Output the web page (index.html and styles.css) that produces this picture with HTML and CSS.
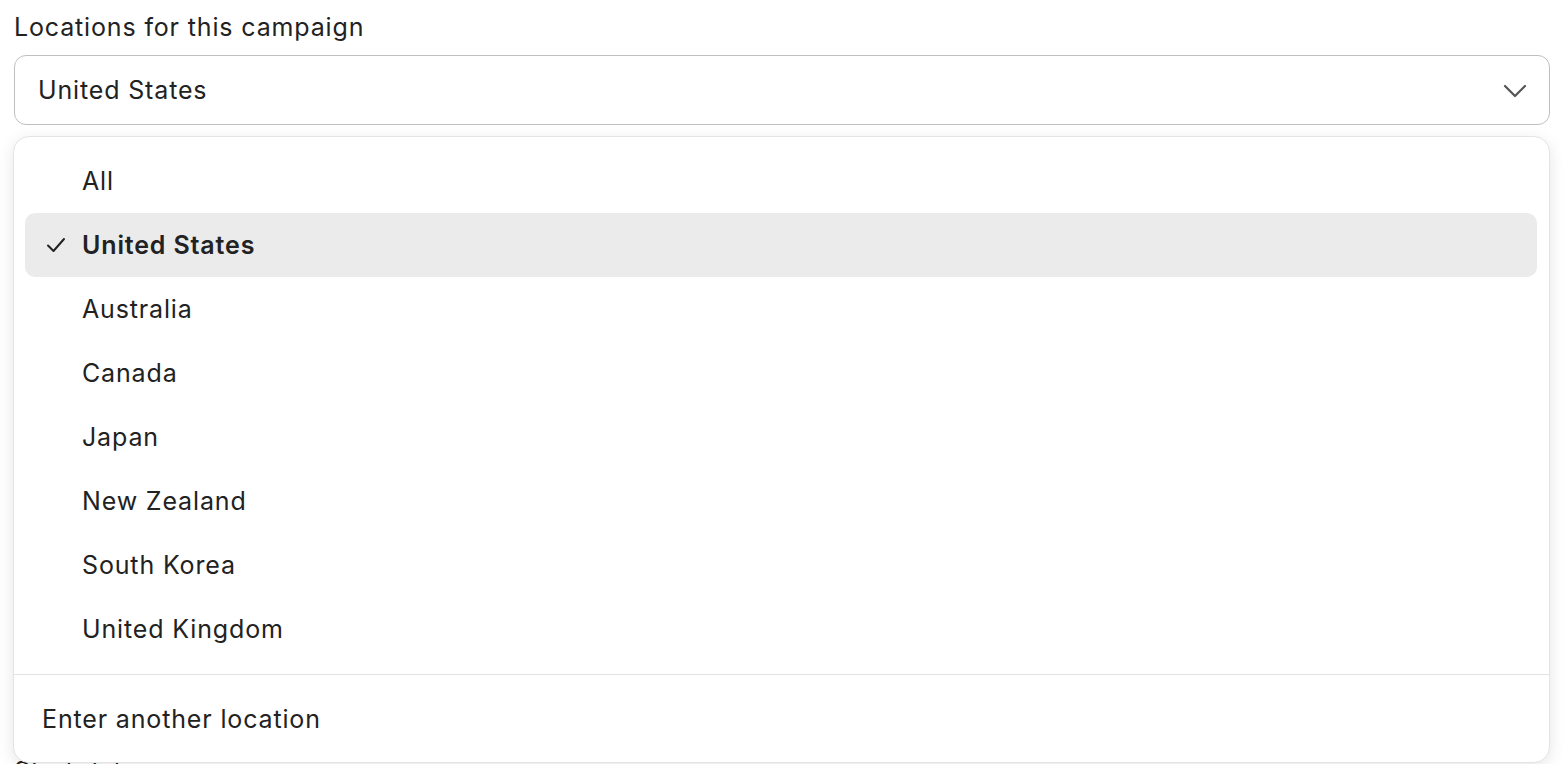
FILE: index.html
```html
<!DOCTYPE html>
<html lang="en">
<head>
  <meta charset="UTF-8">
  <meta name="viewport" content="width=device-width, initial-scale=1.0">
  <title>Campaign locations</title>
  <link rel="stylesheet" href="styles.css">
</head>
<body>
  <div class="field">
    <label class="field-label" for="location">Locations for this campaign</label>
    <button class="select" id="location">
      <span>United States</span>
      <svg class="chevron" width="24" height="16" viewBox="0 0 24 16" fill="none">
        <path d="M2 3l10 10L22 3" stroke="#555" stroke-width="2.2" stroke-linecap="round" stroke-linejoin="round"/>
      </svg>
    </button>

    <!-- Popover menu -->
    <div class="menu">
      <ul class="options">
        <li class="option">All</li>
        <li class="option selected">
          <svg class="check" width="20" height="18" viewBox="0 0 20 18" fill="none">
            <path d="M2 9.5l5.5 5.5L18 3" stroke="#222" stroke-width="2" stroke-linecap="round" stroke-linejoin="round"/>
          </svg>
          United States
        </li>
        <li class="option">Australia</li>
        <li class="option">Canada</li>
        <li class="option">Japan</li>
        <li class="option">New Zealand</li>
        <li class="option">South Korea</li>
        <li class="option">United Kingdom</li>
      </ul>
      <div class="menu-footer">Enter another location</div>
    </div>
  </div>

  <div class="field next">
    <label class="field-label">Start date</label>
  </div>
</body>
</html>
```

FILE: styles.css
```css
* { margin: 0; padding: 0; box-sizing: border-box; font-family: 'Inter', 'Noto Sans', sans-serif; letter-spacing: 0.85px; }

body {
  background: #fff;
  color: #222;
  padding: 11px 14px 0 14px;
  overflow: hidden;
}

.field { position: relative; }

.field-label {
  display: block;
  font-size: 25px;
  line-height: 32px;
  margin-bottom: 12px;
  color: #222;
}

.select {
  display: flex;
  align-items: center;
  justify-content: space-between;
  width: 100%;
  height: 70px;
  padding: 0 22px 0 23px;
  background: #fff;
  border: 1.5px solid #bfbfbf;
  border-radius: 12px;
  font-size: 25px;
  color: #222;
  text-align: left;
  cursor: pointer;
}

.chevron { margin-top: 2px; }

.menu {
  position: absolute;
  top: 125px;
  left: -1px;
  width: 1537px;
  height: 627px;
  background: #fff;
  border: 1px solid #e4e4e4;
  border-radius: 16px;
  box-shadow: 0 4px 16px rgba(0,0,0,0.10);
  overflow: hidden;
  z-index: 10;
}

.options {
  list-style: none;
  padding: 12px 12px 13px 11px;
  border-bottom: 1px solid #e2e2e2;
}

.option {
  position: relative;
  height: 64px;
  line-height: 64px;
  padding-left: 57px;
  border-radius: 10px;
  font-size: 25px;
  color: #222;
}

.option.selected {
  background: #ebebeb;
  font-weight: 600;
}

.check {
  position: absolute;
  left: 21px;
  top: 23px;
}

.menu-footer {
  height: 88px;
  line-height: 88px;
  padding-left: 28px;
  font-size: 25px;
  color: #222;
}

.next { margin-top: 630px; }
```
